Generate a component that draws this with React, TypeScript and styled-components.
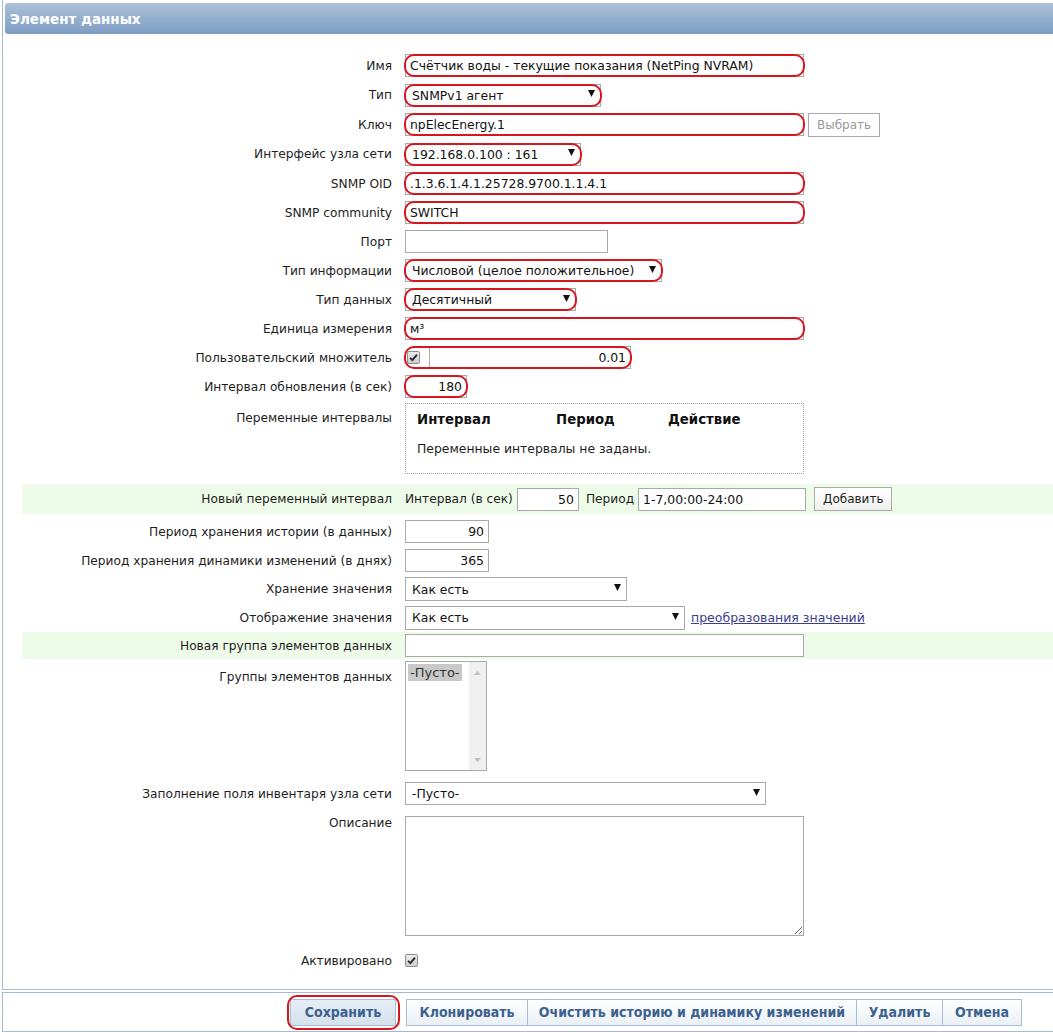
import React from "react";
import styled, { createGlobalStyle, css } from "styled-components";

const Global = createGlobalStyle`
  html, body { margin: 0; padding: 0; background: #ffffff; overflow: hidden; }
  body {
    font-family: "DejaVu Sans", Tahoma, Verdana, sans-serif;
    font-size: 12.2px;
    color: #1e1e1e;
  }
  * { box-sizing: border-box; }
`;

const Page = styled.div`
  width: 1062px;
`;

const Panel = styled.div`
  margin-left: 2px;
  border: 1px solid #a6bad0;
  border-top: none;
  padding: 3px 2px 14px 2px;
`;

const Header = styled.div`
  height: 31px;
  border-radius: 3px;
  background: linear-gradient(#acc1d8, #7d9dc3);
  color: #ffffff;
  font-weight: bold;
  font-size: 13.5px;
  display: flex;
  align-items: center;
  padding-left: 5px;
`;

const Form = styled.div`
  margin: 17px 0 0 17px;
  display: flex;
  flex-direction: column;
`;

const Row = styled.div<{ $green?: boolean; $h?: number; $top?: boolean; $pt?: number; $pb?: number }>`
  display: grid;
  grid-template-columns: 370px 1fr;
  column-gap: 13px;
  align-items: ${(p) => (p.$top ? "start" : "center")};
  min-height: ${(p) => p.$h ?? 29}px;
  padding-top: ${(p) => p.$pt ?? 0}px;
  padding-bottom: ${(p) => p.$pb ?? 0}px;
  background: ${(p) => (p.$green ? "#eefbe9" : "transparent")};
`;

const Label = styled.div<{ $pt?: number }>`
  text-align: right;
  line-height: 14px;
  padding-top: ${(p) => p.$pt ?? 0}px;
  white-space: nowrap;
`;

const Field = styled.div`
  display: flex;
  align-items: center;
  gap: 4px;
`;

const Highlight = styled.span`
  position: relative;
  display: inline-flex;
  align-items: center;
  &::after {
    content: "";
    position: absolute;
    inset: 0 -1px;
    border: 2px solid #d6161e;
    border-radius: 10px;
    pointer-events: none;
  }
`;

const fieldBase = css`
  height: 23px;
  border: 1px solid #a9a9a9;
  background: #ffffff;
  font-family: "DejaVu Sans", Tahoma, sans-serif;
  font-size: 12.4px;
  color: #111111;
`;

const TextInput = styled.input<{ $w: number; $right?: boolean }>`
  ${fieldBase};
  width: ${(p) => p.$w}px;
  padding: 0 4px;
  text-align: ${(p) => (p.$right ? "right" : "left")};
  outline: none;
`;

const SelectBox = styled.div<{ $w: number; $tall?: boolean }>`
  ${fieldBase};
  height: ${(p) => (p.$tall ? 24 : 23)}px;
  width: ${(p) => p.$w}px;
  display: flex;
  align-items: center;
  justify-content: space-between;
  padding: 0 5px 0 6px;
  white-space: nowrap;
`;

const Caret = () => (
  <svg width="7" height="7" viewBox="0 0 7 7" style={{ marginTop: -3 }}>
    <polygon points="0,0 7,0 3.5,7" fill="#111" />
  </svg>
);

const Select = ({ w, value, tall }: { w: number; value: string; tall?: boolean }) => (
  <SelectBox $w={w} $tall={tall}>
    <span>{value}</span>
    <Caret />
  </SelectBox>
);

const SmallButton = styled.button<{ $disabled?: boolean; $ml?: number }>`
  height: 24px;
  padding: 0 8px;
  margin-left: ${(p) => p.$ml ?? 0}px;
  border: 1px solid #aaaaaa;
  background: ${(p) => (p.$disabled ? "#ffffff" : "linear-gradient(#ffffff, #f0f0f0)")};
  color: ${(p) => (p.$disabled ? "#9a9a9a" : "#222222")};
  font-family: "DejaVu Sans", Tahoma, sans-serif;
  font-size: 12px;
`;

const CheckBoxBox = styled.span<{ $ml?: number }>`
  width: 13px;
  height: 13px;
  margin-left: ${(p) => p.$ml ?? 0}px;
  border: 1px solid #8e8e8e;
  border-radius: 2px;
  background: linear-gradient(#ececec, #cdcdcd);
  display: inline-flex;
  align-items: center;
  justify-content: center;
  flex: none;
`;

const CheckBox = ({ ml }: { ml?: number }) => (
  <CheckBoxBox $ml={ml}>
    <svg width="9" height="9" viewBox="0 0 9 9">
      <path d="M1 4.8 L3.4 7.2 L8 1.6" stroke="#2a2a2a" strokeWidth="1.9" fill="none" />
    </svg>
  </CheckBoxBox>
);

const MultiplierWrap = styled.span`
  display: inline-flex;
  align-items: center;
  gap: 9px;
  padding-left: 1px;
`;

const IntervalsBox = styled.div`
  width: 399px;
  height: 71px;
  border: 1px dotted #9b9b9b;
  padding: 8px 11px 0 11px;
`;

const IntervalsHead = styled.div`
  display: grid;
  grid-template-columns: 139px 112px auto;
  font-weight: bold;
  font-size: 13.3px;
  line-height: 16px;
  color: #111111;
`;

const IntervalsEmpty = styled.div`
  margin-top: 14px;
  line-height: 14px;
  font-size: 12.4px;
`;

const InlineLabel = styled.span<{ $ml?: number }>`
  white-space: nowrap;
  margin-left: ${(p) => p.$ml ?? 0}px;
`;

const LinkText = styled.a`
  color: #3d3d8d;
  text-decoration: underline;
  margin-left: 2px;
  font-size: 12.5px;
`;

const ListBox = styled.div`
  width: 82px;
  height: 110px;
  border: 1px solid #a9a9a9;
  display: flex;
`;

const ListItems = styled.div`
  flex: 1;
  padding: 2px 0 0 2px;
`;

const ListOption = styled.div`
  display: inline-block;
  background: #c9c9c9;
  color: #333333;
  font-size: 13px;
  line-height: 17px;
  padding: 0 2px 0 2px;
`;

const ScrollTrack = styled.div`
  width: 17px;
  background: #f0f0f0;
  display: flex;
  flex-direction: column;
  justify-content: space-between;
  align-items: center;
  padding: 9px 0 8px;
`;

const Arrow = ({ down }: { down?: boolean }) => (
  <svg width="7" height="4" viewBox="0 0 7 4">
    <polygon points={down ? "0,0 7,0 3.5,4" : "0,4 7,4 3.5,0"} fill="#c2c2c2" />
  </svg>
);

const TextArea = styled.textarea`
  width: 399px;
  height: 120px;
  border: 1px solid #a9a9a9;
  resize: both;
  display: block;
  outline: none;
`;

const Footer = styled.div`
  margin: 2px 0 0 2px;
  border: 1px solid #a6bad0;
  height: 40px;
  display: flex;
  align-items: center;
  justify-content: flex-end;
  gap: 11px;
  padding-right: 39px;
`;

const ButtonGroup = styled.div`
  display: flex;
`;

const FooterButton = styled.button<{ $primary?: boolean; $w: number }>`
  height: 27px;
  width: ${(p) => p.$w}px;
  border: 1px solid #a9bdd3;
  margin-left: -1px;
  background: ${(p) => (p.$primary ? "linear-gradient(#e6edf5, #d6e1ec)" : "linear-gradient(#ffffff, #eaf0f6)")};
  color: #3c618e;
  font-family: "DejaVu Sans Condensed", "DejaVu Sans", sans-serif;
  font-stretch: condensed;
  font-weight: bold;
  font-size: 14px;
  padding: 0;
`;

const SaveHighlight = styled(Highlight)`
  &::after {
    inset: -4px -4px;
  }
`;

export default function App() {
  return (
    <Page>
      <Global />
      <Panel>
        <Header>Элемент данных</Header>
        <Form>
          <Row>
            <Label>Имя</Label>
            <Field>
              <Highlight>
                <TextInput $w={399} readOnly value="Счётчик воды - текущие показания (NetPing NVRAM)" />
              </Highlight>
            </Field>
          </Row>
          <Row $h={30}>
            <Label>Тип</Label>
            <Field>
              <Highlight>
                <Select w={196} value="SNMPv1 агент" />
              </Highlight>
            </Field>
          </Row>
          <Row>
            <Label>Ключ</Label>
            <Field>
              <Highlight>
                <TextInput $w={399} readOnly value="npElecEnergy.1" />
              </Highlight>
              <SmallButton $disabled>Выбрать</SmallButton>
            </Field>
          </Row>
          <Row $h={30}>
            <Label>Интерфейс узла сети</Label>
            <Field>
              <Highlight>
                <Select w={176} value="192.168.0.100 : 161" />
              </Highlight>
            </Field>
          </Row>
          <Row>
            <Label>SNMP OID</Label>
            <Field>
              <Highlight>
                <TextInput $w={399} readOnly value=".1.3.6.1.4.1.25728.9700.1.1.4.1" />
              </Highlight>
            </Field>
          </Row>
          <Row>
            <Label>SNMP community</Label>
            <Field>
              <Highlight>
                <TextInput $w={399} readOnly value="SWITCH" />
              </Highlight>
            </Field>
          </Row>
          <Row>
            <Label>Порт</Label>
            <Field>
              <TextInput $w={203} readOnly value="" />
            </Field>
          </Row>
          <Row>
            <Label>Тип информации</Label>
            <Field>
              <Highlight>
                <Select w={257} value="Числовой (целое положительное)" />
              </Highlight>
            </Field>
          </Row>
          <Row>
            <Label>Тип данных</Label>
            <Field>
              <Highlight>
                <Select w={171} value="Десятичный" />
              </Highlight>
            </Field>
          </Row>
          <Row>
            <Label>Единица измерения</Label>
            <Field>
              <Highlight>
                <TextInput $w={399} readOnly value="м³" />
              </Highlight>
            </Field>
          </Row>
          <Row>
            <Label>Пользовательский множитель</Label>
            <Field>
              <Highlight>
                <MultiplierWrap>
                  <CheckBox ml={1} />
                  <TextInput $w={202} $right readOnly value="0.01" />
                </MultiplierWrap>
              </Highlight>
            </Field>
          </Row>
          <Row>
            <Label>Интервал обновления (в сек)</Label>
            <Field>
              <Highlight>
                <TextInput $w={62} $right readOnly value="180" />
              </Highlight>
            </Field>
          </Row>
          <Row $top $pt={2} $pb={10}>
            <Label $pt={8}>Переменные интервалы</Label>
            <IntervalsBox>
              <IntervalsHead>
                <span>Интервал</span>
                <span>Период</span>
                <span>Действие</span>
              </IntervalsHead>
              <IntervalsEmpty>Переменные интервалы не заданы.</IntervalsEmpty>
            </IntervalsBox>
          </Row>
          <Row $green $h={30}>
            <Label>Новый переменный интервал</Label>
            <Field>
              <InlineLabel>Интервал (в сек)</InlineLabel>
              <TextInput $w={62} $right readOnly value="50" />
              <InlineLabel $ml={3}>Период</InlineLabel>
              <TextInput $w={168} readOnly value="1-7,00:00-24:00" />
              <SmallButton $ml={4}>Добавить</SmallButton>
            </Field>
          </Row>
          <Row $h={32} $pt={3}>
            <Label>Период хранения истории (в данных)</Label>
            <Field>
              <TextInput $w={84} $right readOnly value="90" />
            </Field>
          </Row>
          <Row>
            <Label>Период хранения динамики изменений (в днях)</Label>
            <Field>
              <TextInput $w={84} $right readOnly value="365" />
            </Field>
          </Row>
          <Row $h={28}>
            <Label>Хранение значения</Label>
            <Field>
              <Select w={222} value="Как есть" tall />
            </Field>
          </Row>
          <Row>
            <Label>Отображение значения</Label>
            <Field>
              <Select w={280} value="Как есть" tall />
              <LinkText href="#">преобразования значений</LinkText>
            </Field>
          </Row>
          <Row $green $h={27}>
            <Label>Новая группа элементов данных</Label>
            <Field>
              <TextInput $w={399} readOnly value="" />
            </Field>
          </Row>
          <Row $top $pt={2} $pb={8}>
            <Label $pt={9}>Группы элементов данных</Label>
            <ListBox>
              <ListItems>
                <ListOption>-Пусто-</ListOption>
              </ListItems>
              <ScrollTrack>
                <Arrow />
                <Arrow down />
              </ScrollTrack>
            </ListBox>
          </Row>
          <Row>
            <Label>Заполнение поля инвентаря узла сети</Label>
            <Field>
              <Select w={361} value="-Пусто-" />
            </Field>
          </Row>
          <Row $top $pt={8} $pb={10}>
            <Label>Описание</Label>
            <TextArea readOnly value="" />
          </Row>
          <Row>
            <Label>Активировано</Label>
            <Field>
              <CheckBox />
            </Field>
          </Row>
        </Form>
      </Panel>
      <Footer>
        <SaveHighlight>
          <FooterButton $primary $w={106}>Сохранить</FooterButton>
        </SaveHighlight>
        <ButtonGroup>
          <FooterButton $w={122}>Клонировать</FooterButton>
          <FooterButton $w={330}>Очистить историю и динамику изменений</FooterButton>
          <FooterButton $w={87}>Удалить</FooterButton>
          <FooterButton $w={80}>Отмена</FooterButton>
        </ButtonGroup>
      </Footer>
    </Page>
  );
}
